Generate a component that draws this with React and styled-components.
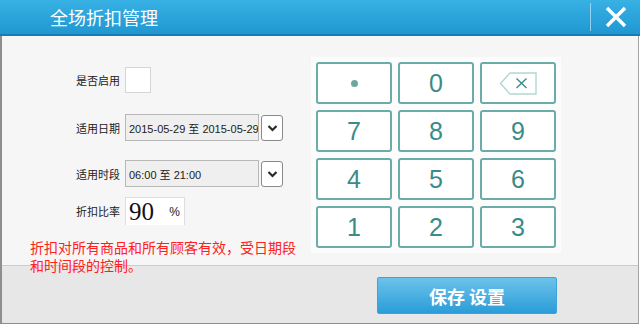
import styled, { createGlobalStyle } from 'styled-components';

const GlobalStyle = createGlobalStyle`
	html, body {
		margin: 0;
		padding: 0;
		background: #ffffff;
	}
	body {
		font-family: 'Liberation Sans', 'Noto Sans CJK SC', sans-serif;
	}
	* {
		box-sizing: border-box;
	}
`;

const Window = styled.div`
	width: 640px;
	height: 324px;
	display: flex;
	flex-direction: column;
`;

const Header = styled.header`
	height: 36px;
	display: flex;
	align-items: center;
	background: linear-gradient(#38b1e5, #1f97d1);
	border-bottom: 2px solid #1a7cb2;
`;

const Title = styled.h1`
	margin: 0;
	padding-left: 50px;
	font-size: 18px;
	font-weight: normal;
	color: #ffffff;
	font-family: 'Noto Sans CJK SC', sans-serif;
	line-height: 34px;
`;

const CloseBox = styled.div`
	margin-left: auto;
	width: 50px;
	height: 28px;
	display: flex;
	align-items: center;
	justify-content: center;
	border-left: 1px solid rgba(190, 230, 250, 0.7);
`;

const Content = styled.div`
	flex: 1;
	width: 639px;
	display: flex;
	flex-direction: column;
	border-left: 2px solid #8e8e8e;
	border-right: 1px solid #a5a5a5;
	border-bottom: 1px solid #8e8e8e;
`;

const Body = styled.section`
	height: 229px;
	display: flex;
	background: #f6f6f6;
`;

const LeftCol = styled.div`
	width: 309px;
	padding: 31px 0 0 28px;
`;

const FormRow = styled.div`
	display: flex;
	align-items: center;
	padding-left: 46px;
	height: ${p => p.$h}px;
	margin-top: ${p => p.$mt}px;
`;

const Label = styled.span`
	width: 49px;
	font-size: 11px;
	color: #222;
	font-family: 'Noto Sans CJK SC', sans-serif;
`;

const CheckBox = styled.div`
	width: 26px;
	height: 26px;
	background: #ffffff;
	border: 1px solid #d6d6d6;
`;

const Select = styled.div`
	width: 134px;
	height: 27px;
	display: flex;
	align-items: center;
	padding-left: 3px;
	background: #efefef;
	border: 1px solid #b8b8b8;
	font-size: 11px;
	color: #222;
	white-space: nowrap;
	overflow: hidden;
`;

const DropButton = styled.div`
	margin-left: 2px;
	width: 22px;
	height: 26px;
	display: flex;
	align-items: center;
	justify-content: center;
	background: #ffffff;
	border: 1px solid #8a8a8a;
	border-radius: 3px;
`;

const RateBox = styled.div`
	width: 60px;
	height: 28px;
	display: flex;
	align-items: center;
	padding: 0 4px 0 3px;
	background: #ffffff;
	border: 1px solid #dedede;
	border-bottom: none;
`;

const RateValue = styled.span`
	font-family: 'Liberation Serif', 'DejaVu Serif', serif;
	font-size: 25px;
	line-height: 28px;
	color: #111;
`;

const Percent = styled.span`
	margin-left: auto;
	font-size: 12px;
	color: #222;
`;

const Note = styled.p`
	position: relative;
	z-index: 1;
	margin: 13px 0 0;
	max-width: 272px;
	font-size: 14px;
	line-height: 18px;
	color: #ff2020;
	font-family: 'Noto Sans CJK SC', sans-serif;
`;

const KeyPanel = styled.div`
	margin-top: 21px;
	align-self: flex-start;
	padding: 5px;
	background: #fcfcfc;
	display: grid;
	grid-template-columns: repeat(3, 76px);
	grid-auto-rows: 42px;
	gap: 6px;
`;

const Key = styled.button`
	display: flex;
	align-items: center;
	justify-content: center;
	padding: 0;
	background: #ffffff;
	border: 2px solid #6aaca7;
	border-radius: 3px;
	color: #3a8b89;
	font-family: 'Liberation Sans', sans-serif;
	font-size: 25px;
`;

const Dot = styled.span`
	width: 7px;
	height: 7px;
	border-radius: 50%;
	background: #6fa6a4;
`;

const Footer = styled.footer`
	flex: 1;
	background: #e7e7e7;
	border-top: 1px solid #cbcbcb;
	padding: 11px 0 0 375px;
`;

const SaveButton = styled.button`
	width: 180px;
	height: 37px;
	padding: 0;
	border: 1px solid #3aa3d8;
	border-radius: 2px;
	background: linear-gradient(#6dc2eb, #2a9dd8);
	color: #ffffff;
	font-family: 'Noto Sans CJK SC', sans-serif;
	font-size: 18px;
	font-weight: bold;
`;

const Chevron = () => (
	<svg width="11" height="8" viewBox="0 0 11 8">
		<path d="M1.5 2 L5.5 6 L9.5 2" fill="none" stroke="#2a2a2a" strokeWidth="2.2" />
	</svg>
);

const CloseIcon = () => (
	<svg width="22" height="22" viewBox="0 0 22 22">
		<path d="M2 2 L20 20 M20 2 L2 20" stroke="#ffffff" strokeWidth="3.4" />
	</svg>
);

const BackspaceIcon = () => (
	<svg width="38" height="23" viewBox="0 0 38 23">
		<path d="M1.5 11.5 L11 1 H37 V22 H11 Z" fill="#ffffff" stroke="#b0d8d2" strokeWidth="1.4" />
		<path d="M17.5 6.5 L27.5 16 M27.5 6.5 L17.5 16" stroke="#3a8b89" strokeWidth="1.4" />
	</svg>
);

const keys = ['dot', '0', 'back', '7', '8', '9', '4', '5', '6', '1', '2', '3'];

const App = () => {
	return (
		<>
			<GlobalStyle />
			<Window>
				<Header>
					<Title>全场折扣管理</Title>
					<CloseBox>
						<CloseIcon />
					</CloseBox>
				</Header>
				<Content>
					<Body>
						<LeftCol>
							<FormRow $h={26} $mt={0}>
								<Label>是否启用</Label>
								<CheckBox />
							</FormRow>
							<FormRow $h={27} $mt={21}>
								<Label>适用日期</Label>
								<Select>2015-05-29 至 2015-05-29</Select>
								<DropButton>
									<Chevron />
								</DropButton>
							</FormRow>
							<FormRow $h={27} $mt={19}>
								<Label>适用时段</Label>
								<Select>06:00 至 21:00</Select>
								<DropButton>
									<Chevron />
								</DropButton>
							</FormRow>
							<FormRow $h={28} $mt={10}>
								<Label>折扣比率</Label>
								<RateBox>
									<RateValue>90</RateValue>
									<Percent>%</Percent>
								</RateBox>
							</FormRow>
							<Note>折扣对所有商品和所有顾客有效，受日期段和时间段的控制。</Note>
						</LeftCol>
						<KeyPanel>
							{keys.map(k => (
								<Key key={k}>
									{k === 'dot' ? <Dot /> : k === 'back' ? <BackspaceIcon /> : k}
								</Key>
							))}
						</KeyPanel>
					</Body>
					<Footer>
						<SaveButton>保存 设置</SaveButton>
					</Footer>
				</Content>
			</Window>
		</>
	);
};

export default App;
